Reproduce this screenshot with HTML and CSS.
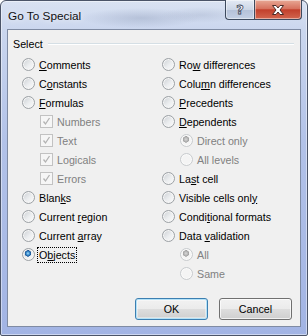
FILE: index.html
```html
<!DOCTYPE html>
<html lang="en">
<head>
  <meta charset="UTF-8" />
  <title>Go To Special</title>
  <link rel="stylesheet" href="styles.css">
</head>
<body>
  <div class="window">
    <div class="titlebar">
      <span class="title">Go To Special</span>
      <div class="caption-buttons">
        <button class="cap help">?</button>
        <button class="cap close">
          <svg width="16" height="12" viewBox="0 0 16 12">
            <path d="M2.5 1.5 H6 L8 4 L10 1.5 H13.5 L10 6 L13.5 10.5 H10 L8 8 L6 10.5 H2.5 L6 6 Z" fill="#fff" stroke="#4a2a26" stroke-width="1" stroke-linejoin="round"/>
          </svg>
        </button>
      </div>
    </div>

    <div class="client">
      <div class="group-head">
        <span class="group-label">Select</span>
        <span class="group-line"></span>
      </div>

      <div class="columns">
        <div class="col">
          <div class="opt"><span class="radio"></span><span><u>C</u>omments</span></div>
          <div class="opt"><span class="radio"></span><span>C<u>o</u>nstants</span></div>
          <div class="opt"><span class="radio"></span><span><u>F</u>ormulas</span></div>
          <div class="opt sub disabled"><span class="check"><svg width="11" height="11" viewBox="0 0 11 11"><path d="M2.5 5.5 L4.5 8 L8.5 2" fill="none" stroke="#b3b3b3" stroke-width="1.3"/></svg></span><span>Numbers</span></div>
          <div class="opt sub disabled"><span class="check"><svg width="11" height="11" viewBox="0 0 11 11"><path d="M2.5 5.5 L4.5 8 L8.5 2" fill="none" stroke="#b3b3b3" stroke-width="1.3"/></svg></span><span>Text</span></div>
          <div class="opt sub disabled"><span class="check"><svg width="11" height="11" viewBox="0 0 11 11"><path d="M2.5 5.5 L4.5 8 L8.5 2" fill="none" stroke="#b3b3b3" stroke-width="1.3"/></svg></span><span>Logicals</span></div>
          <div class="opt sub disabled"><span class="check"><svg width="11" height="11" viewBox="0 0 11 11"><path d="M2.5 5.5 L4.5 8 L8.5 2" fill="none" stroke="#b3b3b3" stroke-width="1.3"/></svg></span><span>Errors</span></div>
          <div class="opt"><span class="radio"></span><span>Blan<u>k</u>s</span></div>
          <div class="opt"><span class="radio"></span><span>Current <u>r</u>egion</span></div>
          <div class="opt"><span class="radio"></span><span>Current <u>a</u>rray</span></div>
          <div class="opt"><span class="radio checked"></span><span class="focus">O<u>b</u>jects</span></div>
        </div>
        <div class="col">
          <div class="opt"><span class="radio"></span><span>Ro<u>w</u> differences</span></div>
          <div class="opt"><span class="radio"></span><span>Colu<u>m</u>n differences</span></div>
          <div class="opt"><span class="radio"></span><span><u>P</u>recedents</span></div>
          <div class="opt"><span class="radio"></span><span><u>D</u>ependents</span></div>
          <div class="opt sub disabled"><span class="radio checked"></span><span>Direct only</span></div>
          <div class="opt sub disabled"><span class="radio"></span><span>All levels</span></div>
          <div class="opt"><span class="radio"></span><span>La<u>s</u>t cell</span></div>
          <div class="opt"><span class="radio"></span><span>Visible cells onl<u>y</u></span></div>
          <div class="opt"><span class="radio"></span><span>Condi<u>t</u>ional formats</span></div>
          <div class="opt"><span class="radio"></span><span>Data <u>v</u>alidation</span></div>
          <div class="opt sub disabled"><span class="radio checked"></span><span>All</span></div>
          <div class="opt sub disabled"><span class="radio"></span><span>Same</span></div>
        </div>
      </div>

      <div class="actions">
        <button class="btn default">OK</button>
        <button class="btn">Cancel</button>
      </div>
    </div>
  </div>
</body>
</html>
```

FILE: styles.css
```css
body {
  margin: 0;
  background: #fff;
  font-family: "Liberation Sans", Arial, sans-serif;
}
.window {
  width: 308px;
  height: 336px;
  box-sizing: border-box;
  border: 1px solid #4b5468;
  border-radius: 6px 6px 2px 2px;
  background:
    radial-gradient(ellipse 60px 10px at 140px 17px, rgba(120, 135, 165, 0.3), transparent),
    radial-gradient(ellipse 40px 8px at 200px 14px, rgba(120, 135, 165, 0.2), transparent),
    linear-gradient(to bottom, #d9e2f2 0, #cad6ee 30px, #b2c2e8 140px, #a2b4e4 100%);
  box-shadow: inset 0 0 0 1px rgba(255, 255, 255, 0.45);
  display: flex;
  flex-direction: column;
}
.titlebar {
  height: 28px;
  display: flex;
  align-items: flex-start;
}
.title {
  font-size: 11.8px;
  color: #111;
  padding: 8px 0 0 7px;
  text-shadow: 0 0 6px rgba(255, 255, 255, 0.9);
}
.caption-buttons {
  margin-left: auto;
  margin-right: 5px;
  margin-top: -1px;
  display: flex;
}
.cap {
  height: 20px;
  border: 1px solid #3d4a5e;
  border-top: none;
  padding: 0;
  display: flex;
  align-items: center;
  justify-content: center;
  box-shadow: inset 0 0 0 1px rgba(255, 255, 255, 0.45);
}
.help {
  width: 29px;
  border-right: none;
  border-radius: 0 0 0 4px;
  background: linear-gradient(to bottom, #e4eaf4 0, #ccd6e6 50%, #b4c1d8 51%, #c4d0e4 100%);
  font-family: "DejaVu Sans", sans-serif;
  font-weight: bold;
  font-size: 13px;
  color: #fff;
  -webkit-text-stroke: 0.8px #3b4558;
}
.close {
  width: 48px;
  border-radius: 0 0 4px 0;
  background: linear-gradient(to bottom, #e8a996 0, #d7735f 45%, #c2402c 52%, #d2664f 100%);
}
.client {
  flex: 1;
  margin: 0 6px 8px 6px;
  border: 1px solid #7f8ba3;
  background: #f0f0f0;
  font-size: 10.7px;
  color: #000;
  display: flex;
  flex-direction: column;
}
.group-head {
  display: flex;
  align-items: center;
  height: 14px;
  margin: 7px 6px 0 5px;
}
.group-line {
  flex: 1;
  height: 1px;
  margin-left: 5px;
  background: #d5dfe5;
  border-bottom: 1px solid #fff;
}
.columns {
  display: grid;
  grid-template-columns: 140px 1fr;
  margin-top: 4px;
  padding-left: 14px;
}
.opt {
  display: flex;
  align-items: center;
  gap: 4px;
  height: 19px;
}
.opt.sub {
  padding-left: 18px;
}
.disabled {
  color: #808080;
}
u {
  text-decoration-thickness: 1px;
  text-underline-offset: 1px;
}
.radio {
  width: 13px;
  height: 13px;
  box-sizing: border-box;
  border-radius: 50%;
  border: 1px solid #9ca1a5;
  background: linear-gradient(135deg, #cbcfd3 0, #eceef0 55%, #fbfbfb 100%);
  box-shadow: inset 0 0 0 1px #f6f6f6;
  flex: none;
}
.radio.checked {
  background:
    radial-gradient(circle at 45% 40%, #a9dcf7 0, #3f92d2 1.6px, #154f91 3px, rgba(21, 79, 145, 0) 3.4px),
    linear-gradient(135deg, #cbcfd3 0, #eceef0 55%, #fbfbfb 100%);
}
.disabled .radio {
  border-color: #c8cbce;
  background: #f4f4f4;
  box-shadow: inset 0 0 0 1px #fafafa;
}
.disabled .radio.checked {
  background:
    radial-gradient(circle at 45% 40%, #d8d8d8 0, #b5b5b5 2px, #9e9e9e 3px, rgba(158, 158, 158, 0) 3.4px),
    #f4f4f4;
}
.check {
  width: 13px;
  height: 13px;
  box-sizing: border-box;
  border: 1px solid #c2c2c2;
  background: #f6f6f6;
  display: flex;
  align-items: center;
  justify-content: center;
  flex: none;
}
.focus {
  border: 1px dotted #000;
  padding: 0 1px;
  line-height: 14px;
  margin-left: -2px;
}
.actions {
  margin-top: auto;
  display: flex;
  justify-content: flex-end;
  gap: 11px;
  padding: 0 8px 6px 0;
}
.btn {
  width: 73px;
  height: 22px;
  font-family: "Liberation Sans", Arial, sans-serif;
  font-size: 10.7px;
  color: #000;
  border: 1px solid #707070;
  border-radius: 3px;
  background: linear-gradient(to bottom, #f2f2f2 0, #ebebeb 50%, #dddddd 51%, #cfcfcf 100%);
  box-shadow: inset 0 0 0 1px rgba(255, 255, 255, 0.7);
  padding: 0;
}
.btn.default {
  border-color: #3c7fb1;
  box-shadow: inset 0 0 0 1px #b4e2f8, inset 0 0 0 2px rgba(255, 255, 255, 0.4);
}
```
